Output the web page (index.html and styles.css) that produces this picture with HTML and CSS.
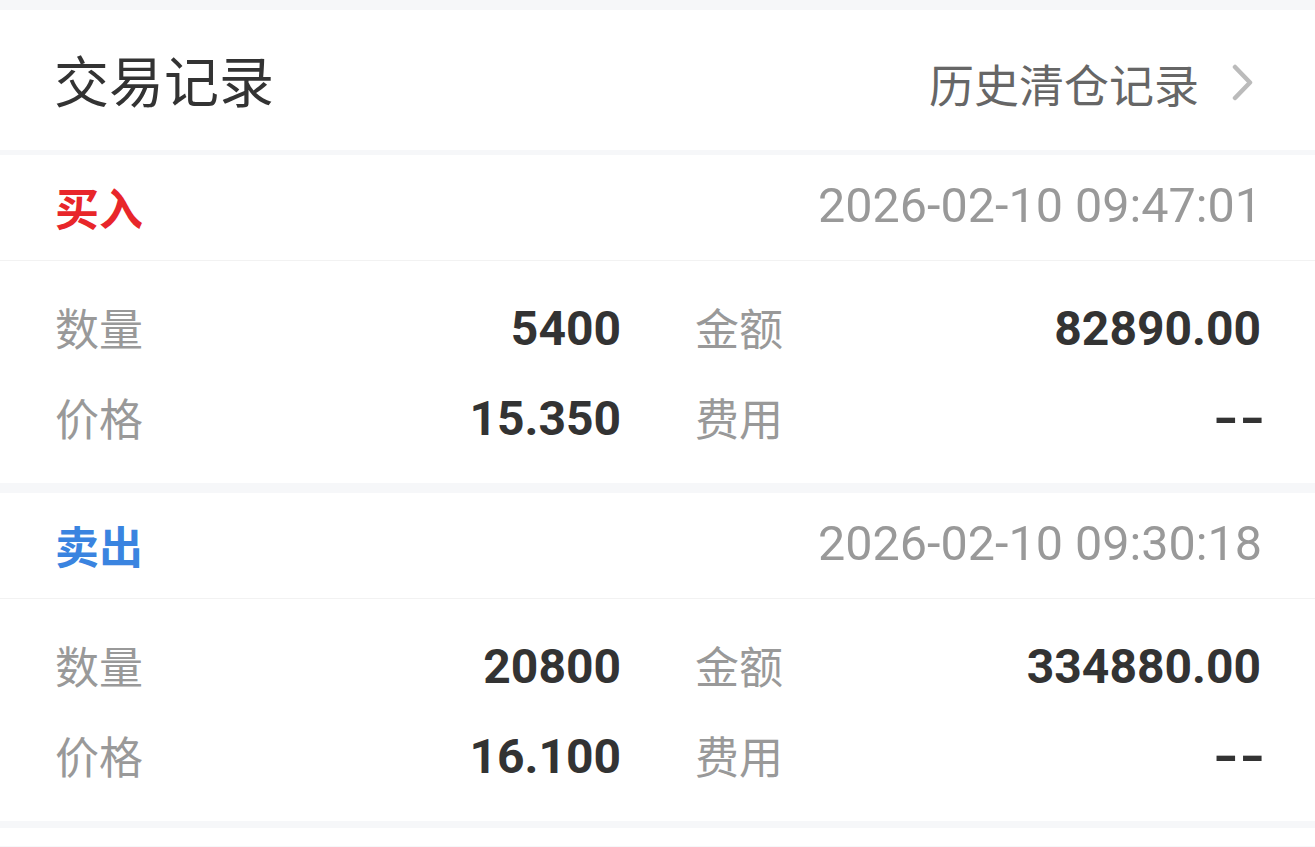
FILE: index.html
```html
<!DOCTYPE html>
<html lang="zh-CN">
<head>
<meta charset="utf-8">
<title>交易记录</title>
<link rel="stylesheet" href="styles.css">
</head>
<body>
<div class="page">
  <header class="head">
    <h1 class="title">交易记录</h1>
    <a class="history">
      <span>历史清仓记录</span>
      <svg class="chev" width="24" height="38" viewBox="0 0 24 38"><polyline points="4,3 19,18.5 4,34" fill="none" stroke="#bbbbbb" stroke-width="4.5" stroke-linecap="round" stroke-linejoin="round"/></svg>
    </a>
  </header>

  <section class="card">
    <div class="card-head">
      <span class="side buy">买入</span>
      <span class="time">2026-02-10 09:47:01</span>
    </div>
    <div class="card-body">
      <div class="cell"><span class="label">数量</span><span class="val">5400</span></div>
      <div class="cell"><span class="label">金额</span><span class="val">82890.00</span></div>
      <div class="cell"><span class="label">价格</span><span class="val">15.350</span></div>
      <div class="cell"><span class="label">费用</span><span class="val dash">--</span></div>
    </div>
  </section>

  <section class="card">
    <div class="card-head">
      <span class="side sell">卖出</span>
      <span class="time">2026-02-10 09:30:18</span>
    </div>
    <div class="card-body">
      <div class="cell"><span class="label">数量</span><span class="val">20800</span></div>
      <div class="cell"><span class="label">金额</span><span class="val">334880.00</span></div>
      <div class="cell"><span class="label">价格</span><span class="val">16.100</span></div>
      <div class="cell"><span class="label">费用</span><span class="val dash">--</span></div>
    </div>
  </section>
  <div class="tail"></div>
</div>
</body>
</html>
```

FILE: styles.css
```css
* { box-sizing: border-box; }
html, body { margin: 0; padding: 0; background: #ffffff; }
body {
  font-family: "Noto Sans CJK SC", "Noto Sans", sans-serif;
  color: #333333;
}
.page {
  width: 1315px;
  height: 847px;
  overflow: hidden;
  background: #f6f7f9;
  padding-top: 10px;
}
.head {
  height: 140px;
  background: #ffffff;
  display: flex;
  align-items: center;
  justify-content: space-between;
  padding: 0 60px 0 54px;
  margin-bottom: 5px;
}
.title {
  margin: 0;
  font-size: 55px;
  font-weight: 400;
  line-height: 1;
  color: #333333;
  margin-top: -4px;
}
.history {
  display: flex;
  align-items: center;
  gap: 32px;
  font-size: 45px;
  line-height: 1;
  color: #666666;
  margin-top: 6px;
}
.chev { display: block; margin-top: -1px; }
.card {
  background: #ffffff;
  margin-bottom: 10px;
}
.card-head {
  height: 106px;
  display: flex;
  align-items: center;
  justify-content: space-between;
  padding: 0 53px 0 55px;
  border-bottom: 1px solid #f2f2f2;
}
.side {
  font-size: 44px;
  font-weight: 700;
  line-height: 1;
  margin-top: -2px;
}
.buy { color: #e8262a; }
.sell { color: #3a84e0; }
.time {
  font-family: Roboto, "Noto Sans", sans-serif;
  font-size: 48.5px;
  color: #999999;
  line-height: 1;
  margin-top: -2px;
}
.card-body {
  display: grid;
  grid-template-columns: 566px 566px;
  column-gap: 74px;
  padding: 23px 54px 19px 55px;
}
.cell {
  height: 90px;
  display: flex;
  align-items: center;
  justify-content: space-between;
}
.label {
  font-size: 44px;
  color: #999999;
  line-height: 1;
  margin-top: -4px;
}
.val {
  font-family: Roboto, "Noto Sans", sans-serif;
  font-size: 48px;
  font-weight: 700;
  color: #333333;
  line-height: 1;
}
.dash {
  transform: scaleX(1.4);
  transform-origin: right center;
  margin-right: -5px;
}
.tail {
  height: 18px;
  background: #ffffff;
  margin-top: -3px;
}
```
